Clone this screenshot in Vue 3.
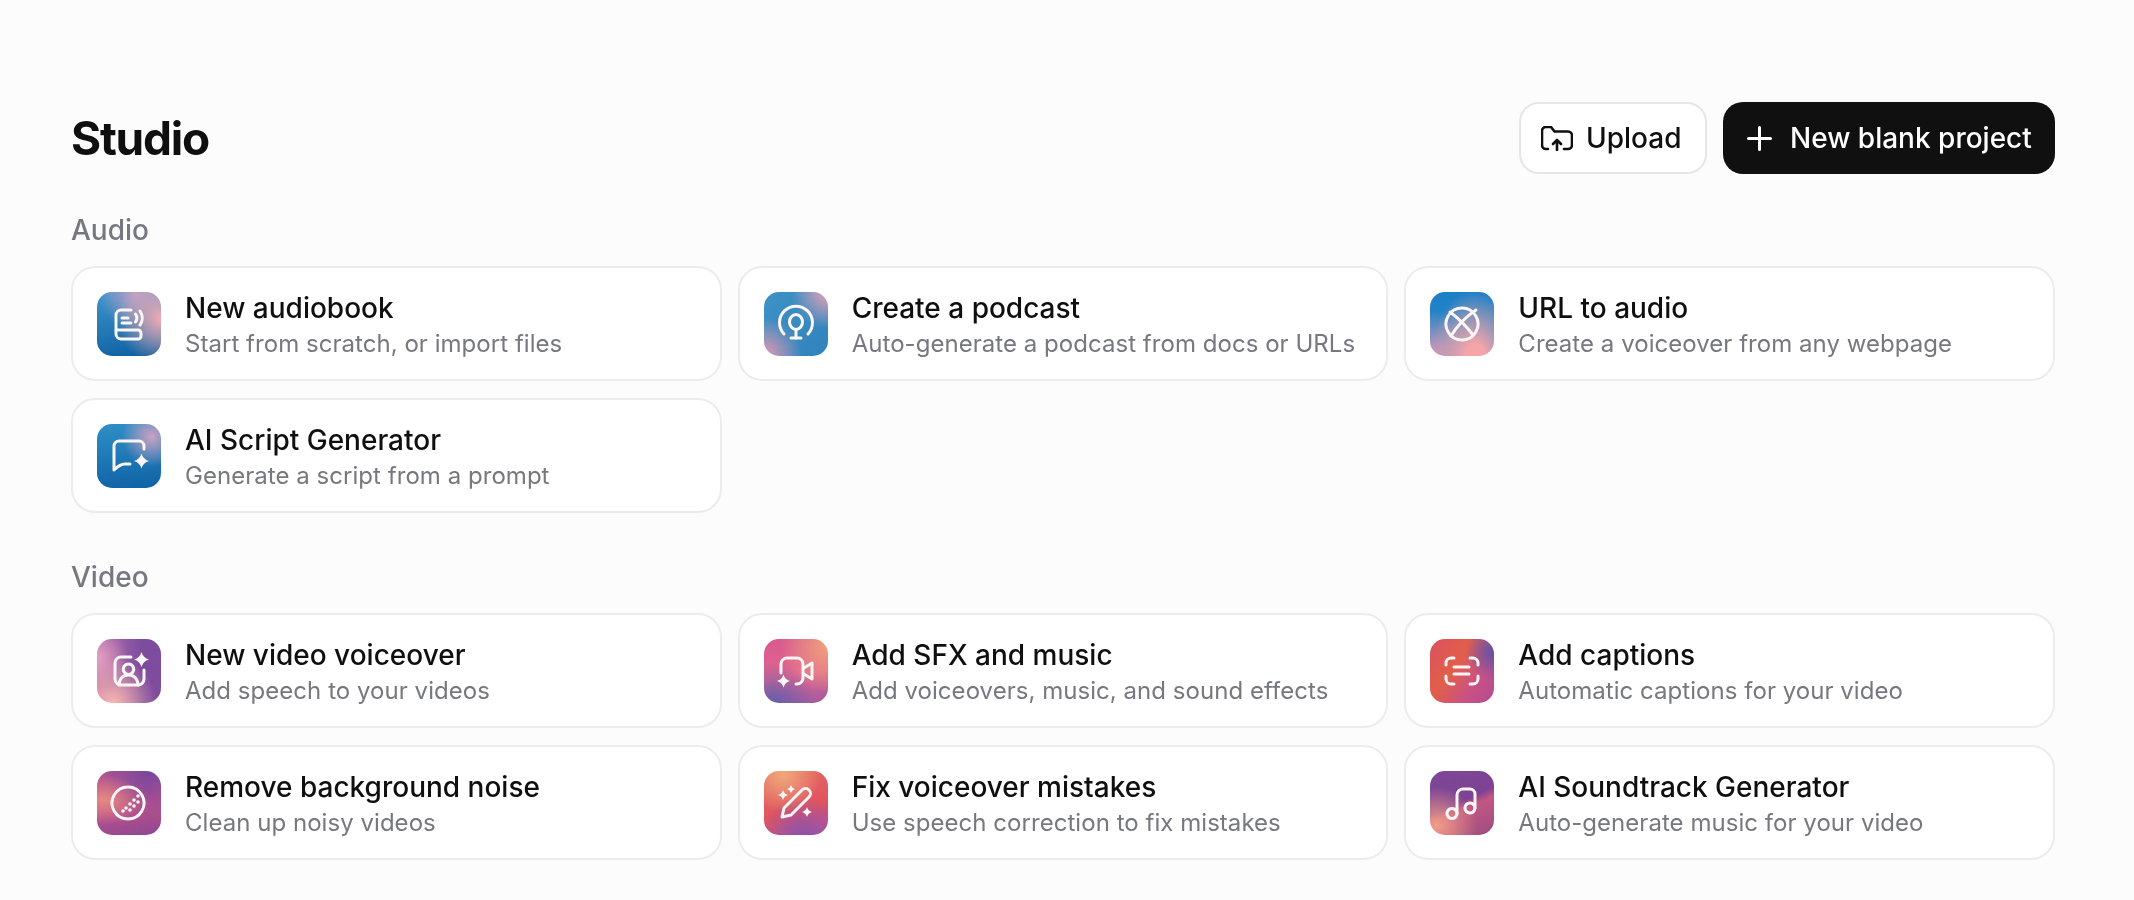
<script setup>
const sparkle = (x, y, r) => {
  const k = r * 0.22
  return `M${x} ${y - r}Q${x + k} ${y - k} ${x + r} ${y}Q${x + k} ${y + k} ${x} ${y + r}Q${x - k} ${y + k} ${x - r} ${y}Q${x - k} ${y - k} ${x} ${y - r}Z`
}
const sections = [
  {
    name: 'Audio',
    items: [
      { key: 'book', title: 'New audiobook', sub: 'Start from scratch, or import files',
        d: ['M34 18H24a5 5 0 0 0-5 5V42a5 5 0 0 0 5 5H41a3 3 0 0 0 3-3V41a3 3 0 0 0-3-3H19', 'M25 26H31', 'M25 31H34', 'M38.5 22a7 7 0 0 1 0 8', 'M43 19a12 12 0 0 1 0 14'], fill: [] },
      { key: 'pod', title: 'Create a podcast', sub: 'Auto-generate a podcast from docs or URLs',
        d: ['M20 42A16.5 16.5 0 1 1 44 42', 'M32 22.5a6.5 7.5 0 0 1 0 15a6.5 7.5 0 0 1 0-15Z', 'M32 38V46', 'M27 46H37'], fill: [] },
      { key: 'url', title: 'URL to audio', sub: 'Create a voiceover from any webpage',
        d: ['M32 16a16 16 0 1 1-0.01 0Z', 'M20 20C28 26 37 35 43 43', 'M46 18C37 24 27 34 21 44'], fill: [] },
      { key: 'chat', title: 'AI Script Generator', sub: 'Generate a script from a prompt',
        d: ['M47 25V22a5 5 0 0 0-5-5H22a5 5 0 0 0-5 5V46C21 42 25 40 28 40H33'], fill: [sparkle(44.5, 37, 7.5)] },
    ],
  },
  {
    name: 'Video',
    items: [
      { key: 'voice', title: 'New video voiceover', sub: 'Add speech to your videos',
        d: ['M34 18H24a6 6 0 0 0-6 6V40a6 6 0 0 0 6 6H41a6 6 0 0 0 6-6V31', 'M31.5 25a5.2 5.2 0 1 1-.01 0Z', 'M22 46c0-6 4-10 9.5-10S41 40 41 46'], fill: [sparkle(44.5, 20.5, 7.5)] },
      { key: 'sfx', title: 'Add SFX and music', sub: 'Add voiceovers, music, and sound effects',
        d: ['M17 34V25a6 6 0 0 1 6-6H33a6 6 0 0 1 6 6V39a6 6 0 0 1-6 6H32', 'M40 29L48 24V40L40 35'], fill: [sparkle(19.5, 42, 6.5)] },
      { key: 'cap', title: 'Add captions', sub: 'Automatic captions for your video',
        d: ['M16 26V24a5 5 0 0 1 5-5H24', 'M40 19H43a5 5 0 0 1 5 5V26', 'M48 37V40a5 5 0 0 1-5 5H40', 'M24 45H21a5 5 0 0 1-5-5V37', 'M24 28H39', 'M24 35H39'], fill: [] },
      { key: 'hiss', title: 'Remove background noise', sub: 'Clean up noisy videos',
        d: ['M31 16a16 16 0 1 1-0.01 0Z'], fill: [],
        dots: [[41, 25], [37, 29], [41, 31], [33, 33], [37, 35], [29, 37], [33, 39], [26, 40]] },
      { key: 'fix', title: 'Fix voiceover mistakes', sub: 'Use speech correction to fix mistakes',
        d: ['M18 46L20 37L38 19a4.5 4.5 0 0 1 7 7L27 44Z'], fill: [sparkle(19, 24, 5), sparkle(27, 18, 4), sparkle(43, 41, 5)] },
      { key: 'music', title: 'AI Soundtrack Generator', sub: 'Auto-generate music for your video',
        d: ['M22 37.5a5 5 0 1 1-.01 0Z', 'M40 32a5 5 0 1 1-.01 0Z', 'M27 42V24a6 6 0 0 1 6-6H40a5 5 0 0 1 5 5V37'], fill: [] },
    ],
  },
]
</script>

<template>
  <main class="page">
    <svg class="defs" width="0" height="0" aria-hidden="true">
      <filter id="grain" x="0" y="0" width="100%" height="100%">
        <feTurbulence type="fractalNoise" baseFrequency="0.9" numOctaves="2" seed="4" />
        <feColorMatrix type="saturate" values="0" />
      </filter>
    </svg>

    <header class="head">
      <h1>Studio</h1>
      <div class="actions">
        <button class="btn light">
          <svg viewBox="0 0 32 25" class="upload" fill="none" stroke="currentColor" stroke-width="2.6" stroke-linecap="round" stroke-linejoin="round">
            <path d="M7 23H5a4 4 0 0 1-4-4V5a4 4 0 0 1 4-4h5l3.5 4.5H27a4 4 0 0 1 4 4V19a4 4 0 0 1-4 4H23" />
            <path d="M16 24V15M12 18L16 14L20 18" />
          </svg>
          <span>Upload</span>
        </button>
        <button class="btn dark">
          <svg viewBox="0 0 25 25" class="plus" fill="none" stroke="currentColor" stroke-width="3" stroke-linecap="round">
            <path d="M12.5 1.5V23.5M1.5 12.5H23.5" />
          </svg>
          <span>New blank project</span>
        </button>
      </div>
    </header>

    <section v-for="s in sections" :key="s.name" class="section">
      <h2>{{ s.name }}</h2>
      <div class="grid">
        <article v-for="it in s.items" :key="it.key" class="card">
          <div class="tile" :class="it.key">
            <svg viewBox="0 0 64 64" width="64" height="64" fill="none">
              <rect class="noise" width="64" height="64" filter="url(#grain)" />
              <path v-for="(p, i) in it.d" :key="i" :d="p" class="stroke" />
              <path v-for="(p, i) in it.fill" :key="'f' + i" :d="p" class="solid" />
              <circle v-for="(c, i) in it.dots" :key="'c' + i" :cx="c[0]" :cy="c[1]" r="1.8" class="solid" />
            </svg>
          </div>
          <div class="text">
            <div class="title">{{ it.title }}</div>
            <div class="sub">{{ it.sub }}</div>
          </div>
        </article>
      </div>
    </section>
  </main>
</template>

<style>
html, body { background: #fcfcfc; }
</style>

<style scoped>
.page {
  box-sizing: border-box;
  width: 2134px;
  padding: 102px 79px 0 71px;
  font-family: Inter, "Liberation Sans", sans-serif;
  background: #fcfcfc;
  min-height: 900px;
  overflow: hidden;
}
.defs { position: absolute; }
.head {
  display: flex;
  justify-content: space-between;
  align-items: center;
  height: 72px;
}
h1 {
  margin: 0;
  font-size: 46px;
  font-weight: 700;
  letter-spacing: -1.2px;
  color: #0f0f10;
}
.actions { display: flex; gap: 16px; }
.btn {
  box-sizing: border-box;
  height: 72px;
  display: flex;
  align-items: center;
  font: 500 28px Inter, sans-serif;
  border-radius: 20px;
  white-space: nowrap;
}
.light {
  background: #fff;
  border: 2px solid #e6e6e8;
  color: #0f0f10;
  width: 188px;
  padding: 0 0 0 20px;
  gap: 13px;
}
.dark {
  background: #101010;
  border: none;
  color: #fff;
  width: 332px;
  padding: 0 0 0 24px;
  gap: 18px;
}
.upload { width: 32px; height: 25px; flex: none; }
.plus { width: 25px; height: 25px; flex: none; }
.section { margin-top: 38px; }
.section + .section { margin-top: 46px; }
h2 {
  margin: 1px 0 18px;
  height: 36px;
  line-height: 36px;
  font-size: 28px;
  font-weight: 500;
  color: #77777f;
}
.grid {
  display: grid;
  grid-template-columns: repeat(3, 1fr);
  gap: 17px 16px;
}
.card {
  box-sizing: border-box;
  height: 115px;
  display: flex;
  align-items: center;
  gap: 24px;
  padding: 0 24px;
  background: #fff;
  border: 2px solid #ececee;
  border-radius: 24px;
}
.tile {
  width: 64px;
  height: 64px;
  flex: none;
  border-radius: 15px;
  overflow: hidden;
}
.tile svg { display: block; }
.noise { opacity: 0.1; mix-blend-mode: overlay; }
.stroke { stroke: #fbf5f5; stroke-width: 3; stroke-linecap: round; stroke-linejoin: round; }
.solid { fill: #fbf5f5; }
.text { padding-top: 3px; }
.title {
  font-size: 28px;
  font-weight: 500;
  line-height: 36px;
  color: #0f0f10;
}
.sub {
  font-size: 24px;
  font-weight: 400;
  letter-spacing: 0.04px;
  line-height: 32px;
  color: #77777f;
  margin-top: 2px;
}
.book { background: radial-gradient(circle at 100% 42%, #f3a9b0 0, rgba(243,169,176,0) 60%), radial-gradient(circle at 60% 0, #c09dc4 0, rgba(192,157,196,0) 50%), linear-gradient(170deg, #3b93cc, #0e5c9f); }
.pod { background: radial-gradient(circle at 100% 0, #e8a0b4 0, rgba(232,160,180,0) 40%), radial-gradient(circle at 0 100%, #e896b0 0, rgba(232,150,176,0) 42%), linear-gradient(135deg, #3b8fc6, #2f80ba); }
.url { background: radial-gradient(ellipse at 70% 110%, #f6a2a6 0, #f6a2a6 18%, rgba(246,162,166,0) 72%), radial-gradient(circle at 0 100%, #d494b4 0, rgba(212,148,180,0) 50%), linear-gradient(180deg, #1a7cc6, #3389c6); }
.chat { background: radial-gradient(circle at 85% 20%, #c89fc0 0, rgba(200,159,192,0) 40%), linear-gradient(175deg, #2d8cc6, #0e5fa3); }
.voice { background: radial-gradient(circle at 25% 100%, #f8b5ae 0, rgba(248,181,174,0) 55%), radial-gradient(circle at 0 30%, #e49dc0 0, rgba(228,157,192,0) 40%), linear-gradient(90deg, #b46ea9, #7a4a9c 70%); }
.sfx { background: radial-gradient(circle at 100% 10%, #f0a078 0, rgba(240,160,120,0) 55%), radial-gradient(circle at 15% 105%, #5c5cac 0, rgba(92,92,172,0) 50%), linear-gradient(170deg, #d8568f, #e0648a 55%, #a0569f); }
.cap { background: radial-gradient(circle at 100% 20%, #5a4fa5 0, rgba(90,79,165,0) 35%), linear-gradient(125deg, #d94f5c, #e25c48 40%, #c94f80 70%, #b04a90); }
.hiss { background: radial-gradient(ellipse at 10% 45%, #e8867e 0, rgba(232,134,126,0) 50%), radial-gradient(circle at 80% 0, #75449b 0, rgba(117,68,155,0) 55%), linear-gradient(170deg, #a8508f, #b85088 55%, #8c4490); }
.fix { background: radial-gradient(circle at 30% 5%, #f0a678 0, rgba(240,166,120,0) 50%), radial-gradient(circle at 60% 105%, #8850a8 0, rgba(136,80,168,0) 55%), linear-gradient(160deg, #e46a62, #e0525c 60%, #b4509a); }
.music { background: radial-gradient(ellipse at 10% 85%, #f09a84 0, rgba(240,154,132,0) 50%), linear-gradient(155deg, #7a4696 0, #7a4090 48%, #c0557e 58%, #9a4a80); }
</style>
